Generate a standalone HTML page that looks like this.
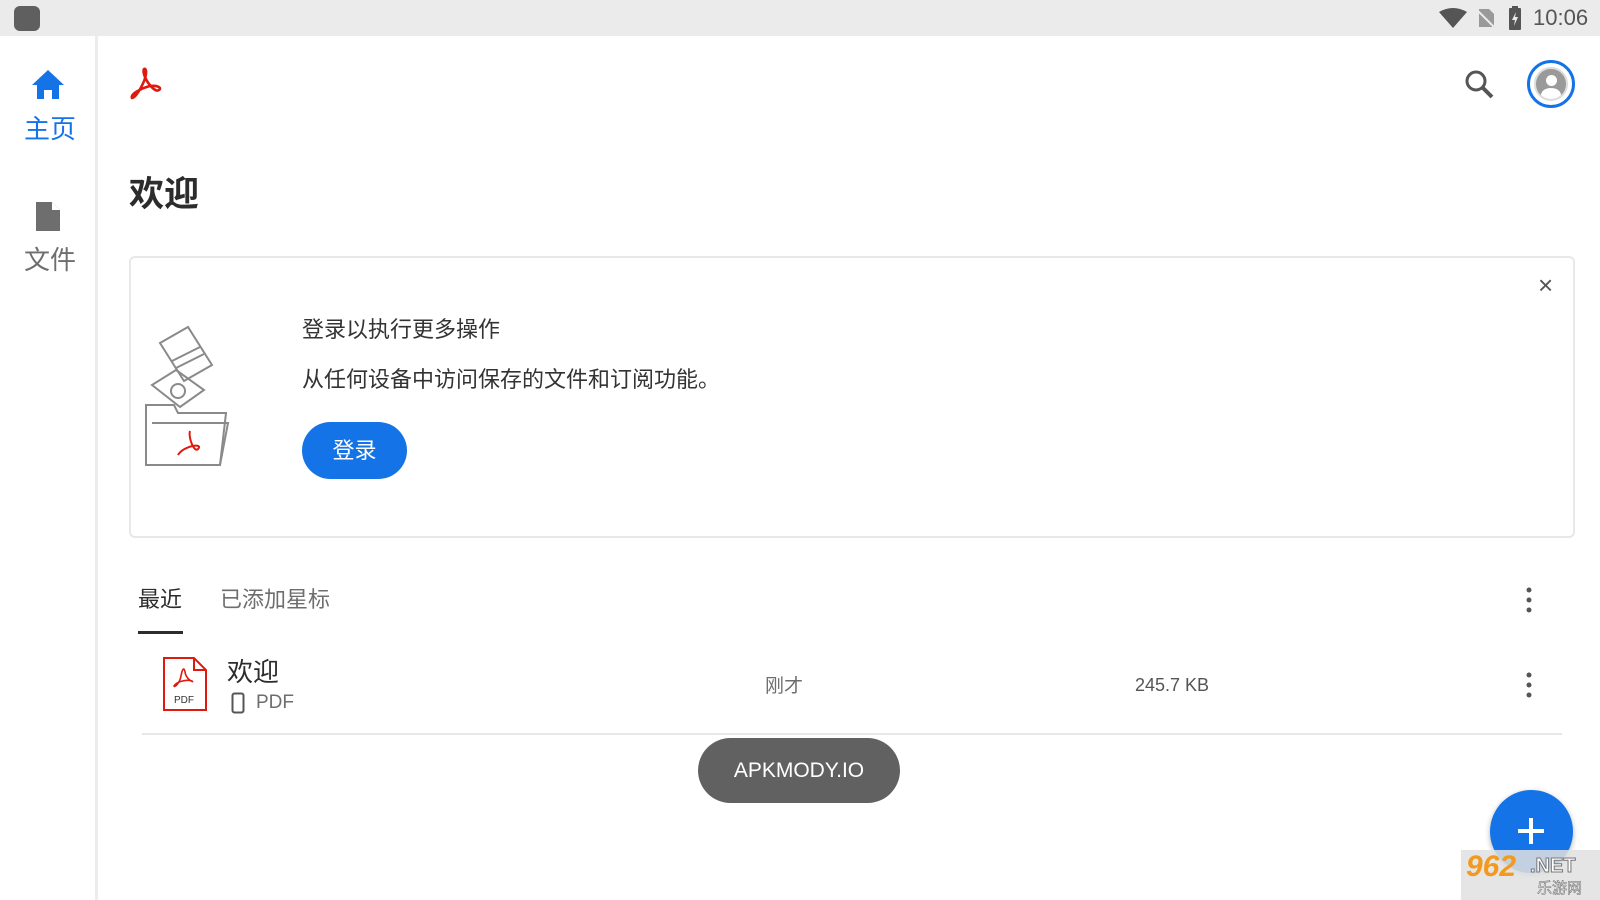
<!DOCTYPE html><html><head><meta charset="utf-8"><style>
*{margin:0;padding:0;box-sizing:border-box}
body{width:1600px;height:900px;overflow:hidden;background:#fff;font-family:"Liberation Sans","Noto Sans CJK SC",sans-serif;position:relative;color:#2c2c2c}
.a{position:absolute}
</style></head><body>
<div class="a" style="left:0;top:0;width:1600px;height:36px;background:#ebebeb"></div>
<div class="a" style="left:14px;top:6px;width:26px;height:25px;border-radius:6px;background:#5f5f5f"></div>
<svg class="a" style="left:1438px;top:8px" width="30" height="20"><path d="M1 4 Q15 -4 29 4 L15 20Z" fill="#555"/></svg>
<svg class="a" style="left:1476px;top:8px" width="20" height="20"><path d="M3 1 H13 L18 6 V19 H3Z" fill="#999"/><path d="M1 2 L19 20" stroke="#ebebeb" stroke-width="2"/></svg>
<svg class="a" style="left:1508px;top:6px" width="14" height="24"><rect x="4" y="0" width="6" height="3" fill="#555"/><rect x="1" y="2" width="12" height="22" rx="1" fill="#555"/><path d="M8 6 L4 14 H7 L6 20 L10 11 H7Z" fill="#ebebeb"/></svg>
<div class="a" style="left:1533px;top:5px;font-size:22px;color:#555">10:06</div>
<div class="a" style="left:0;top:36px;width:98px;height:864px;background:#fff;border-right:3px solid #ececec"></div>
<svg class="a" style="left:31px;top:68px" width="34" height="32"><path d="M17 2 L33 17 H28 V31 H21 V22 H13 V31 H6 V17 H1Z" fill="#1473e6"/></svg>
<div class="a" style="left:24px;top:109px;font-size:26px;color:#1473e6">主页</div>
<svg class="a" style="left:36px;top:202px" width="26" height="30"><path d="M0 0 H16 L24 8 V29 H0Z" fill="#6e6e6e"/><path d="M16 0 V8 H24" fill="#fff"/></svg>
<div class="a" style="left:24px;top:240px;font-size:26px;color:#6e6e6e">文件</div>
<svg class="a" style="left:128px;top:66px" width="36" height="36" viewBox="0 0 36 36"><path d="M4 32 C2 28 14 22 22 20 C30 19 34 22 31 24 C27 27 18 16 16 8 C14 1 19 1 18 8 C17 16 8 32 4 32Z" fill="none" stroke="#e0190f" stroke-width="2.6"/></svg>
<div class="a" style="left:129px;top:166px;font-size:35px;font-weight:bold;color:#2c2c2c">欢迎</div>
<svg class="a" style="left:1464px;top:69px" width="32" height="32"><circle cx="12" cy="12" r="9" fill="none" stroke="#555" stroke-width="3"/><path d="M19 19 L28 28" stroke="#555" stroke-width="4"/></svg>
<div class="a" style="left:1527px;top:60px;width:48px;height:48px;border-radius:50%;border:3px solid #1473e6"></div>
<div class="a" style="left:1534px;top:67px;width:34px;height:34px;border-radius:50%;background:#9a9a9a;overflow:hidden;border:2px solid #ddd"><div class="a" style="left:10px;top:6px;width:11px;height:11px;border-radius:50%;background:#fff"></div><div class="a" style="left:5px;top:19px;width:20px;height:14px;border-radius:50% 50% 0 0;background:#fff"></div></div>
<div class="a" style="left:129px;top:256px;width:1446px;height:282px;border:2px solid #e8e8e8;border-radius:6px"></div>
<div class="a" style="left:1538px;top:270px;font-size:26px;color:#555">×</div>
<svg class="a" style="left:144px;top:325px" width="90" height="145" viewBox="0 0 90 145" fill="none" stroke="#8a8a8a" stroke-width="2"><path d="M16 18 L44 2 L68 40 L40 56Z"/><path d="M28 36 L56 22 M32 43 L60 29"/><path d="M8 60 L32 45 L60 65 L36 82Z"/><circle cx="34" cy="66" r="7"/><path d="M2 80 H30 L34 88 H82 L76 140 H2Z"/><path d="M8 98 H84 L76 140"/><path d="M34 130 C40 120 60 118 54 124 C50 128 44 112 46 106" stroke="#e0190f"/></svg>
<div class="a" style="left:302px;top:312px;font-size:22px;color:#333">登录以执行更多操作</div>
<div class="a" style="left:302px;top:362px;font-size:22px;color:#333">从任何设备中访问保存的文件和订阅功能。</div>
<div class="a" style="left:302px;top:422px;width:105px;height:57px;border-radius:29px;background:#1473e6;color:#fff;font-size:22px;text-align:center;line-height:57px">登录</div>
<div class="a" style="left:138px;top:582px;font-size:22px;color:#2c2c2c">最近</div>
<div class="a" style="left:220px;top:582px;font-size:22px;color:#6e6e6e">已添加星标</div>
<div class="a" style="left:138px;top:631px;width:45px;height:3px;background:#2c2c2c"></div>
<svg class="a" style="left:1524px;top:587px" width="10" height="28"><circle cx="5" cy="3" r="2.5" fill="#555"/><circle cx="5" cy="13" r="2.5" fill="#555"/><circle cx="5" cy="23" r="2.5" fill="#555"/></svg>
<svg class="a" style="left:162px;top:656px" width="46" height="56" viewBox="0 0 46 56"><path d="M2 2 H32 L44 14 V54 H2Z" fill="#fff" stroke="#e0190f" stroke-width="2"/><path d="M32 2 V14 H44" fill="none" stroke="#e0190f" stroke-width="2"/><path d="M12 30 C14 26 24 23 30 25 C33 27 24 24 23 16 C22 10 20 14 19 20 C18 26 13 32 12 30Z" fill="none" stroke="#e0190f" stroke-width="1.6"/><text x="12" y="47" font-size="10" fill="#333" font-family="Liberation Sans">PDF</text></svg>
<div class="a" style="left:227px;top:652px;font-size:26px;color:#2c2c2c">欢迎</div>
<svg class="a" style="left:231px;top:692px" width="14" height="22"><rect x="1.5" y="1.5" width="11" height="19" rx="2" fill="none" stroke="#555" stroke-width="2"/></svg>
<div class="a" style="left:256px;top:692px;font-size:19px;color:#6e6e6e">PDF</div>
<div class="a" style="left:765px;top:671px;font-size:19px;color:#6e6e6e">刚才</div>
<div class="a" style="left:1135px;top:675px;font-size:18px;color:#555">245.7 KB</div>
<svg class="a" style="left:1524px;top:672px" width="10" height="28"><circle cx="5" cy="3" r="2.5" fill="#555"/><circle cx="5" cy="13" r="2.5" fill="#555"/><circle cx="5" cy="23" r="2.5" fill="#555"/></svg>
<div class="a" style="left:142px;top:733px;width:1420px;height:2px;background:#e8e8e8"></div>
<div class="a" style="left:698px;top:738px;width:202px;height:65px;border-radius:33px;background:#616161;color:#fff;font-size:21px;text-align:center;line-height:65px">APKMODY.IO</div>
<div class="a" style="left:1490px;top:790px;width:83px;height:83px;border-radius:50%;background:#1473e6;box-shadow:0 2px 6px rgba(0,0,0,.3)"></div>
<div class="a" style="left:1518px;top:829px;width:26px;height:4px;background:#fff"></div>
<div class="a" style="left:1529px;top:818px;width:4px;height:26px;background:#fff"></div>
<div class="a" style="left:1461px;top:850px;width:139px;height:50px;background:rgba(225,225,225,.85)"></div>
<div class="a" style="left:1466px;top:850px;font-size:30px;font-weight:bold;font-style:italic;color:#f39a1e">962</div>
<div class="a" style="left:1530px;top:855px;font-size:20px;font-weight:bold;color:#fff;-webkit-text-stroke:1px #777">.NET</div>
<div class="a" style="left:1537px;top:877px;font-size:15px;color:#fff;-webkit-text-stroke:.6px #777">乐游网</div>
</body></html>
